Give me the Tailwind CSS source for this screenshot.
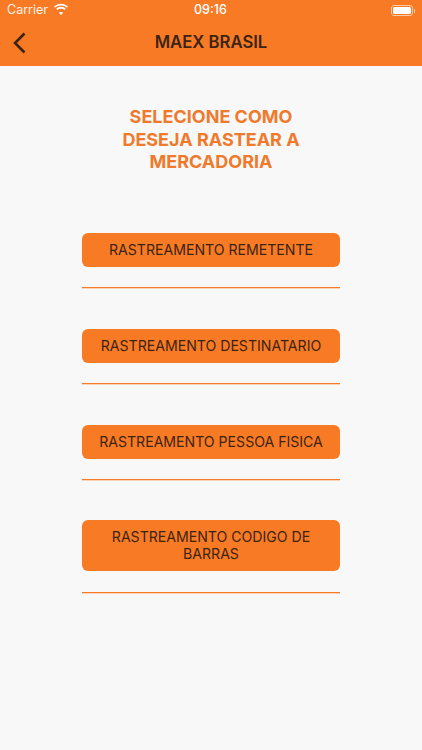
<!DOCTYPE html>
<html lang="pt">
<head>
<meta charset="UTF-8">
<meta name="viewport" content="width=device-width, initial-scale=1.0">
<title>Maex Brasil</title>
<script src="https://cdn.jsdelivr.net/npm/@tailwindcss/browser@4"></script>
</head>
<body class="bg-[#f8f8f8] font-['Inter','Liberation_Sans',sans-serif] w-[422px] h-[750px] overflow-hidden">
  <!-- Status bar + nav -->
  <header class="bg-[#f87a24] h-[66px] flex flex-col">
    <div class="h-[21px] flex items-center justify-between pl-[7px] pr-[7px] text-white text-[12.5px] relative">
      <div class="flex items-center gap-[5px]">
        <span class="text-white/90">Carrier</span>
        <svg width="16" height="12" viewBox="0 0 15 11" class="mb-[3px]"><path d="M7.5 2.2c2.1 0 4 .8 5.500 2.200l1.100-1.200C12.300 1.500 10 .5 7.500 .5S2.700 1.500 .9 3.200L2 4.400c1.500-1.400 3.400-2.200 5.500-2.200zm0 3c1.300 0 2.500 .5 3.400 1.300l1.100-1.200C10.800 4.200 9.200 3.500 7.500 3.500S4.200 4.200 3 5.300l1.100 1.200c.9-.8 2.100-1.300 3.400-1.300zm0 3c-.8 0-1.500 .3-2 .8l2 2.200 2-2.200c-.5-.5-1.200-.8-2-.8z" fill="#fff"/></svg>
      </div>
      <span class="absolute left-[194px] font-medium">09:16</span>
      <div class="flex items-center gap-[1px]">
        <div class="w-[22px] h-[11px] rounded-[3px] border border-white/60 p-[1px]"><div class="w-full h-full bg-white rounded-[1.5px]"></div></div>
        <div class="w-[1px] h-[4px] bg-white/60"></div>
      </div>
    </div>
    <div class="flex-1 flex items-center justify-center relative pb-[1px]">
      <svg width="14" height="22" viewBox="0 0 14 22" class="absolute left-[12px] top-[11px]" fill="none"><path d="M12.500 1.500 3 11l9.500 9.500" stroke="#3b2413" stroke-width="2.600"/></svg>
      <h1 class="text-[#3b2413] text-[16.7px] font-semibold">MAEX BRASIL</h1>
    </div>
  </header>

  <main class="flex flex-col items-center">
    <h2 class="mt-[40px] w-[200px] text-center text-[#f07a2c] text-[18px] leading-[22.500px] font-bold">SELECIONE COMO DESEJA RASTEAR A MERCADORIA</h2>

    <div class="mt-[59px] w-[258px] flex flex-col gap-[41px]">
      <div class="flex flex-col gap-[20px]">
        <button class="bg-[#f87a24] rounded-[6px] h-[34px] px-2 text-[14.100px] text-[#3b2413]">RASTREAMENTO REMETENTE</button>
        <div class="h-[1px] bg-[#f87a24] shadow-[0_1px_0_#fbd3b8]"></div>
      </div>
      <div class="flex flex-col gap-[20px]">
        <button class="bg-[#f87a24] rounded-[6px] h-[34px] px-2 text-[14.100px] text-[#3b2413]">RASTREAMENTO DESTINATARIO</button>
        <div class="h-[1px] bg-[#f87a24] shadow-[0_1px_0_#fbd3b8]"></div>
      </div>
      <div class="flex flex-col gap-[20px]">
        <button class="bg-[#f87a24] rounded-[6px] h-[34px] px-2 text-[14.100px] text-[#3b2413]">RASTREAMENTO PESSOA FISICA</button>
        <div class="h-[1px] bg-[#f87a24] shadow-[0_1px_0_#fbd3b8]"></div>
      </div>
      <div class="flex flex-col gap-[21px] -mt-[1px]">
        <button class="bg-[#f87a24] rounded-[6px] h-[51px] px-6 text-[14.100px] leading-[17px] text-[#3b2413]">RASTREAMENTO CODIGO DE BARRAS</button>
        <div class="h-[1px] bg-[#f87a24] shadow-[0_1px_0_#fbd3b8]"></div>
      </div>
    </div>
  </main>
</body>
</html>
